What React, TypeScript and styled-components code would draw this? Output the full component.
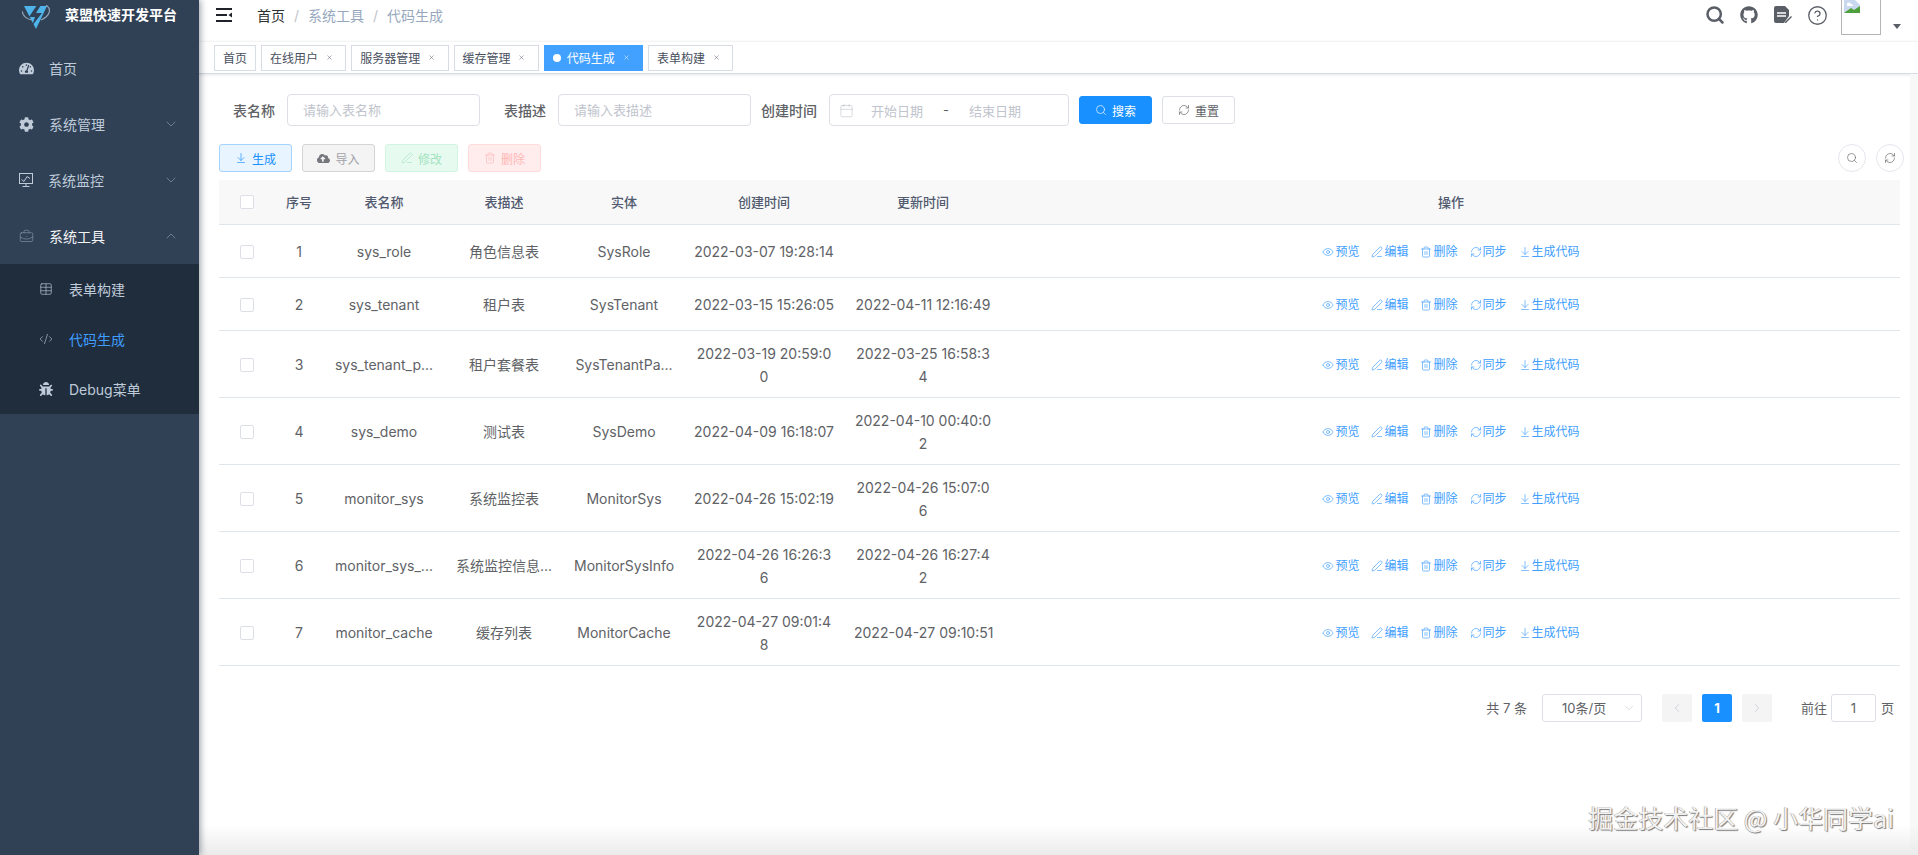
import React from 'react';
import styled, { createGlobalStyle, css } from 'styled-components';
import {
  ArrowDownToLine,
  BriefcaseBusiness,
  Calendar,
  ChevronDown,
  ChevronLeft,
  ChevronRight,
  ChevronUp,
  CircleHelp,
  CodeXml,
  Eye,
  PenLine,
  RefreshCw,
  Search,
  Table as TableIcon,
  Trash2,
  X,
} from 'lucide-react';
import { FaBug, FaCloudUploadAlt, FaCog, FaGithub, FaTachometerAlt } from 'react-icons/fa';

const GlobalStyle = createGlobalStyle`
  html, body {
    margin: 0;
    padding: 0;
    background: #fff;
    font-family: Inter, "Noto Sans CJK SC", sans-serif;
    -webkit-font-smoothing: antialiased;
  }
  * {
    box-sizing: border-box;
  }
`;

const Shell = styled.div`
  position: relative;
  display: flex;
  width: 1918px;
  height: 855px;
  overflow: hidden;
  background: #fff;
`;

const Sidebar = styled.aside`
  flex: 0 0 199px;
  background: #304156;
  box-shadow: 2px 0 6px rgba(0, 21, 41, 0.35);
  z-index: 2;
`;

const LogoBar = styled.div`
  display: flex;
  align-items: center;
  height: 40px;
  padding: 0 0 12px 22px;
  gap: 13px;
  color: #fff;
  font-size: 14px;
  font-weight: 700;

  svg {
    margin-top: 5px;
  }
`;

const MenuItem = styled.div<{ $active?: boolean }>`
  display: flex;
  align-items: center;
  height: 56px;
  padding: 0 20px 0 19px;
  gap: 15px;
  font-size: 14px;
  color: ${(p) => (p.$active ? '#f4f4f5' : '#bfcbd9')};
`;

const MenuArrow = styled.span`
  display: flex;
  margin-left: auto;
  color: #909fb0;
`;

const SubMenu = styled.div`
  background: #1f2d3d;
`;

const SubItem = styled.div<{ $active?: boolean }>`
  display: flex;
  align-items: center;
  height: 50px;
  padding-left: 39px;
  gap: 16px;
  font-size: 14px;
  color: ${(p) => (p.$active ? '#409eff' : '#bfcbd9')};

  svg {
    color: #bfcbd9;
  }
`;

const Main = styled.main`
  position: relative;
  flex: 1;
  min-width: 0;
`;

const Navbar = styled.header`
  display: flex;
  align-items: center;
  height: 41px;
  padding: 0 0 11px 17px;
`;

const Crumbs = styled.nav`
  display: flex;
  align-items: center;
  margin-left: 25px;
  font-size: 14px;
  color: #97a8be;
`;

const CrumbRoot = styled.span`
  color: #303133;
`;

const CrumbSep = styled.span`
  margin: 0 9px;
  color: #c0c4cc;
`;

const NavRight = styled.div`
  display: flex;
  align-items: center;
  align-self: stretch;
  margin-left: auto;
  padding-right: 17px;
  color: #5a5e66;
`;

const NavIcon = styled.span`
  display: flex;
  justify-content: center;
  width: 34px;
`;

const Avatar = styled.div`
  align-self: flex-start;
  display: flex;
  width: 40px;
  height: 35px;
  margin-left: 7px;
  padding-left: 2px;
  border: 1px solid #b5b5b5;
  border-top: 0;
`;

const Caret = styled.span`
  align-self: flex-start;
  width: 0;
  height: 0;
  margin: 24px 0 0 12px;
  border: 4px solid transparent;
  border-top: 5px solid #5a5e66;
`;

const TagBar = styled.div`
  display: flex;
  align-items: center;
  height: 33px;
  padding: 0 0 0 15px;
  gap: 5px;
  background: #fff;
  border-top: 1px solid #f4f4f4;
  border-bottom: 1px solid #d8dce5;
  box-shadow: 0 1px 3px rgba(0, 0, 0, 0.1);
`;

const Tag = styled.div<{ $active?: boolean }>`
  display: flex;
  align-items: center;
  height: 26px;
  padding: 0 8px;
  font-size: 12px;
  color: #495060;
  background: #fff;
  border: 1px solid #d8dce5;

  ${(p) =>
    p.$active &&
    css`
      color: #fff;
      background: #42a0ff;
      border-color: #42a0ff;
    `}
`;

const TagDot = styled.i`
  width: 8px;
  height: 8px;
  margin-right: 6px;
  border-radius: 50%;
  background: #fff;
`;

const TagClose = styled.span`
  display: flex;
  align-items: center;
  justify-content: center;
  width: 16px;
  height: 16px;
  margin-left: 3.25px;
`;

const Content = styled.section`
  padding: 20px 18px 0 20px;
`;

const SearchForm = styled.form`
  display: flex;
  align-items: center;
  height: 32px;
  margin: 0 0 18px;
`;

const FieldLabel = styled.label`
  width: 68px;
  padding-right: 12px;
  text-align: right;
  font-size: 14px;
  font-weight: 500;
  color: #606266;
  white-space: nowrap;
`;

const TextInput = styled.input`
  width: 193px;
  height: 32px;
  margin-right: 10px;
  padding: 0 15px;
  font: inherit;
  font-size: 13px;
  border: 1px solid #dcdfe6;
  border-radius: 4px;
  outline: none;

  &::placeholder {
    color: #c0c4cc;
  }
`;

const DateRange = styled.div`
  display: flex;
  align-items: center;
  width: 240px;
  height: 32px;
  margin-right: 10px;
  padding-left: 9px;
  border: 1px solid #dcdfe6;
  border-radius: 4px;
  color: #c0c4cc;
  font-size: 13px;

  svg {
    margin-right: -1px;
  }
`;

const DateText = styled.span`
  width: 88px;
  text-align: center;
`;

const DateSep = styled.span`
  width: 10px;
  text-align: center;
  color: #606266;
`;

const toneStyles = {
  primary: css`
    color: #fff;
    background: #1890ff;
    border-color: #1890ff;
  `,
  plain: css`
    color: #606266;
    background: #fff;
    border-color: #dcdfe6;
  `,
  blue: css`
    color: #1890ff;
    background: #e8f4ff;
    border-color: #a3d3ff;
  `,
  gray: css`
    color: #a0a2a8;
    background: #f4f4f5;
    border-color: #d3d4d6;
  `,
  green: css`
    color: #a3e3c0;
    background: #e7faf0;
    border-color: #d0f5e0;
  `,
  red: css`
    color: #ffb6b6;
    background: #ffeded;
    border-color: #ffdbdb;
  `,
};

type Tone = keyof typeof toneStyles;

const Button = styled.button<{ $tone: Tone }>`
  display: inline-flex;
  align-items: center;
  justify-content: center;
  gap: 5px;
  width: 73px;
  height: 28px;
  padding: 0;
  font: inherit;
  font-size: 12px;
  border: 1px solid;
  border-radius: 3px;
  ${(p) => toneStyles[p.$tone]}

  & + & {
    margin-left: 10px;
  }
`;

const Toolbar = styled.div`
  display: flex;
  align-items: center;
  margin: 0 -4px 8px 0;
`;

const ToolbarRight = styled.div`
  display: flex;
  gap: 10px;
  margin-left: auto;
`;

const RoundButton = styled.button`
  display: flex;
  align-items: center;
  justify-content: center;
  width: 28px;
  height: 28px;
  padding: 0;
  color: #606266;
  background: #fff;
  border: 1px solid #e4e7ed;
  border-radius: 50%;
`;

const Table = styled.table`
  width: 100%;
  table-layout: fixed;
  border-collapse: collapse;
  font-size: 14px;
  color: #606266;
`;

const HeadCell = styled.th`
  height: 44px;
  padding: 0;
  font-size: 13px;
  font-weight: 500;
  color: #515a6e;
  text-align: center;
  background: #f8f8f9;
  border-bottom: 1px solid #dfe6ec;
`;

const Cell = styled.td`
  height: 53px;
  padding: 11px 10px 9px;
  line-height: 23px;
  text-align: center;
  white-space: pre;
  border-bottom: 1px solid #dfe6ec;
`;

const Check = styled.span`
  display: block;
  width: 14px;
  height: 14px;
  margin: 0 auto;
  background: #fff;
  border: 1px solid #dcdfe6;
  border-radius: 2px;
`;

const Ops = styled.div`
  display: flex;
  justify-content: center;
  gap: 12px;
`;

const OpLink = styled.span`
  display: inline-flex;
  align-items: center;
  gap: 1px;
  font-size: 12px;
  color: #409eff;
`;

const Pagination = styled.div`
  display: flex;
  align-items: center;
  justify-content: flex-end;
  height: 28px;
  margin-top: 28px;
  padding-right: 6px;
  font-size: 13px;
  color: #606266;
`;

const PageSize = styled.div`
  position: relative;
  display: flex;
  align-items: center;
  width: 100px;
  height: 28px;
  margin: 0 20px 0 15px;
  padding-left: 19px;
  border: 1px solid #dcdfe6;
  border-radius: 3px;

  svg {
    position: absolute;
    right: 5px;
    color: #c0c4cc;
  }
`;

const PageButton = styled.span<{ $active?: boolean }>`
  display: flex;
  align-items: center;
  justify-content: center;
  width: 30px;
  height: 28px;
  margin-right: 10px;
  border-radius: 2px;
  font-weight: 700;
  color: ${(p) => (p.$active ? '#fff' : '#c0c4cc')};
  background: ${(p) => (p.$active ? '#1890ff' : '#f4f4f5')};
`;

const PageJump = styled.div`
  display: flex;
  align-items: center;
  justify-content: center;
  width: 45px;
  height: 28px;
  margin: 0 5px 0 4px;
  border: 1px solid #dcdfe6;
  border-radius: 3px;
`;

const PageGoto = styled.span`
  margin-left: 19px;
`;

const RightFade = styled.div`
  position: absolute;
  top: 74px;
  right: 0;
  bottom: 0;
  width: 8px;
  background: #f8f8f8;
`;

const BottomFade = styled.div`
  position: absolute;
  left: 199px;
  right: 0;
  bottom: 0;
  height: 30px;
  background: linear-gradient(rgba(235, 235, 235, 0), #ebebeb);
`;

const Watermark = styled.div`
  position: absolute;
  right: 24px;
  bottom: 24px;
  font-family: "Noto Sans CJK SC", sans-serif;
  font-size: 25px;
  line-height: 28px;
  color: #f2f2f2;
  text-shadow: 1px 1px 1px #777, -0.5px -0.5px 0 #999;
  white-space: nowrap;
`;

const Logo = () => (
  <svg width="30" height="24" viewBox="0 0 30 24">
    <path d="M2 1h23L14 24z" fill="#4fb4ea" />
    <path d="M15 0l-8 12h6l-3 9 10-13h-6l5-8z" fill="#304156" />
    <path d="M24 0c6 4 4 11-5 15" fill="none" stroke="#8fa3b6" strokeWidth="1.2" />
    <path d="M0 6c1 5 5 8 10 9" fill="none" stroke="#8fa3b6" strokeWidth="1.2" />
  </svg>
);

const MonitorIcon = () => (
  <svg width="14" height="14" viewBox="0 0 14 14" fill="none" stroke="#bfcbd9" strokeWidth="1">
    <rect x="0.5" y="0.5" width="13" height="10" />
    <path d="M2.5 6.5l2.5 2 3-5 3 2M7 10.5v3M3.5 13.5h7" />
  </svg>
);

const DocIcon = () => (
  <svg width="18" height="18" viewBox="0 0 18 18" fill="#5a5e66">
    <path d="M2 0h9l4 4v6l-5 7H2a2 2 0 0 1-2-2V2a2 2 0 0 1 2-2z" />
    <path d="M3 7h9M3 10h9" stroke="#fff" strokeWidth="1.4" />
    <path d="M11 16l6-6 1 1-6 6h-1z" />
  </svg>
);

const BrokenImage = () => (
  <svg width="16" height="13" viewBox="0 0 16 13">
    <rect width="16" height="13" fill="#c9d8ef" />
    <path d="M3 5a2 2 0 0 1 4-1 2 2 0 0 1 2 2H3z" fill="#fff" />
    <path d="M0 13l7-5 3 2 6-4v7z" fill="#4fa03c" />
    <path d="M11 0l5 5V0z" fill="#fff" />
  </svg>
);

const tags = [
  { name: '首页', affix: true },
  { name: '在线用户' },
  { name: '服务器管理' },
  { name: '缓存管理' },
  { name: '代码生成', active: true },
  { name: '表单构建' },
];

const rows = [
  ['sys_role', '角色信息表', 'SysRole', '2022-03-07 19:28:14', ''],
  ['sys_tenant', '租户表', 'SysTenant', '2022-03-15 15:26:05', '2022-04-11 12:16:49'],
  ['sys_tenant_p...', '租户套餐表', 'SysTenantPa...', '2022-03-19 20:59:0\n0', '2022-03-25 16:58:3\n4'],
  ['sys_demo', '测试表', 'SysDemo', '2022-04-09 16:18:07', '2022-04-10 00:40:0\n2'],
  ['monitor_sys', '系统监控表', 'MonitorSys', '2022-04-26 15:02:19', '2022-04-26 15:07:0\n6'],
  ['monitor_sys_...', '系统监控信息...', 'MonitorSysInfo', '2022-04-26 16:26:3\n6', '2022-04-26 16:27:4\n2'],
  ['monitor_cache', '缓存列表', 'MonitorCache', '2022-04-27 09:01:4\n8', '2022-04-27 09:10:51'],
];

const columnWidths = [55, 50, 120, 120, 120, 160, 158];

const operations = [
  { label: '预览', Icon: Eye },
  { label: '编辑', Icon: PenLine },
  { label: '删除', Icon: Trash2 },
  { label: '同步', Icon: RefreshCw },
  { label: '生成代码', Icon: ArrowDownToLine },
];

const thin = { size: 12, strokeWidth: 1.3 };

export default function App() {
  return (
    <Shell>
      <GlobalStyle />
      <Sidebar>
        <LogoBar>
          <Logo />
          菜盟快速开发平台
        </LogoBar>
        <MenuItem>
          <FaTachometerAlt size={15} />
          首页
        </MenuItem>
        <MenuItem>
          <FaCog size={15} />
          系统管理
          <MenuArrow>
            <ChevronDown size={16} strokeWidth={1} />
          </MenuArrow>
        </MenuItem>
        <MenuItem>
          <MonitorIcon />
          系统监控
          <MenuArrow>
            <ChevronDown size={16} strokeWidth={1} />
          </MenuArrow>
        </MenuItem>
        <MenuItem $active>
          <BriefcaseBusiness size={15} strokeWidth={1} color="#8b98a8" />
          系统工具
          <MenuArrow>
            <ChevronUp size={16} strokeWidth={1} />
          </MenuArrow>
        </MenuItem>
        <SubMenu>
          <SubItem>
            <TableIcon size={14} strokeWidth={1.1} />
            表单构建
          </SubItem>
          <SubItem $active>
            <CodeXml size={14} strokeWidth={1.1} />
            代码生成
          </SubItem>
          <SubItem>
            <FaBug size={14} />
            Debug菜单
          </SubItem>
        </SubMenu>
      </Sidebar>

      <Main>
        <Navbar>
          <svg width="16" height="14" viewBox="0 0 16 14" fill="#1f2329">
            <path d="M0 0h16v2H0zM0 6h11v2H0zM0 12h16v2H0zM16 4.5v5L12.5 7z" />
          </svg>
          <Crumbs>
            <CrumbRoot>首页</CrumbRoot>
            <CrumbSep>/</CrumbSep>
            系统工具
            <CrumbSep>/</CrumbSep>
            代码生成
          </Crumbs>
          <NavRight>
            <NavIcon>
              <Search size={20} strokeWidth={3} />
            </NavIcon>
            <NavIcon>
              <FaGithub size={18} />
            </NavIcon>
            <NavIcon>
              <DocIcon />
            </NavIcon>
            <NavIcon>
              <CircleHelp size={21} strokeWidth={1.5} />
            </NavIcon>
            <Avatar>
              <BrokenImage />
            </Avatar>
            <Caret />
          </NavRight>
        </Navbar>

        <TagBar>
          {tags.map((tag) => (
            <Tag key={tag.name} $active={tag.active}>
              {tag.active && <TagDot />}
              {tag.name}
              {!tag.affix && (
                <TagClose>
                  <X size={7} strokeWidth={1.6} />
                </TagClose>
              )}
            </Tag>
          ))}
        </TagBar>

        <Content>
          <SearchForm>
            <FieldLabel>表名称</FieldLabel>
            <TextInput placeholder="请输入表名称" />
            <FieldLabel>表描述</FieldLabel>
            <TextInput placeholder="请输入表描述" />
            <FieldLabel>创建时间</FieldLabel>
            <DateRange>
              <Calendar size={15} strokeWidth={1} />
              <DateText>开始日期</DateText>
              <DateSep>-</DateSep>
              <DateText>结束日期</DateText>
            </DateRange>
            <Button $tone="primary" type="button">
              <Search {...thin} />
              搜索
            </Button>
            <Button $tone="plain" type="button">
              <RefreshCw {...thin} />
              重置
            </Button>
          </SearchForm>

          <Toolbar>
            <Button $tone="blue">
              <ArrowDownToLine {...thin} />
              生成
            </Button>
            <Button $tone="gray">
              <FaCloudUploadAlt size={13} color="#75777c" />
              导入
            </Button>
            <Button $tone="green">
              <PenLine {...thin} />
              修改
            </Button>
            <Button $tone="red">
              <Trash2 {...thin} />
              删除
            </Button>
            <ToolbarRight>
              <RoundButton>
                <Search {...thin} />
              </RoundButton>
              <RoundButton>
                <RefreshCw {...thin} />
              </RoundButton>
            </ToolbarRight>
          </Toolbar>

          <Table>
            <colgroup>
              {columnWidths.map((w, i) => (
                <col key={i} width={w} />
              ))}
              <col />
            </colgroup>
            <thead>
              <tr>
                <HeadCell>
                  <Check />
                </HeadCell>
                <HeadCell>序号</HeadCell>
                <HeadCell>表名称</HeadCell>
                <HeadCell>表描述</HeadCell>
                <HeadCell>实体</HeadCell>
                <HeadCell>创建时间</HeadCell>
                <HeadCell>更新时间</HeadCell>
                <HeadCell>操作</HeadCell>
              </tr>
            </thead>
            <tbody>
              {rows.map(([name, desc, entity, created, updated], i) => (
                <tr key={name}>
                  <Cell>
                    <Check />
                  </Cell>
                  <Cell>{i + 1}</Cell>
                  <Cell>{name}</Cell>
                  <Cell>{desc}</Cell>
                  <Cell>{entity}</Cell>
                  <Cell>{created}</Cell>
                  <Cell>{updated}</Cell>
                  <Cell>
                    <Ops>
                      {operations.map(({ label, Icon }) => (
                        <OpLink key={label}>
                          <Icon {...thin} />
                          {label}
                        </OpLink>
                      ))}
                    </Ops>
                  </Cell>
                </tr>
              ))}
            </tbody>
          </Table>

          <Pagination>
            共 7 条
            <PageSize>
              10条/页
              <ChevronDown size={14} strokeWidth={1} />
            </PageSize>
            <PageButton>
              <ChevronLeft size={14} strokeWidth={1.2} />
            </PageButton>
            <PageButton $active>1</PageButton>
            <PageButton>
              <ChevronRight size={14} strokeWidth={1.2} />
            </PageButton>
            <PageGoto>前往</PageGoto>
            <PageJump>1</PageJump>页
          </Pagination>
        </Content>

        <RightFade />
      </Main>
      <BottomFade />
      <Watermark>掘金技术社区 @ 小华同学ai</Watermark>
    </Shell>
  );
}
